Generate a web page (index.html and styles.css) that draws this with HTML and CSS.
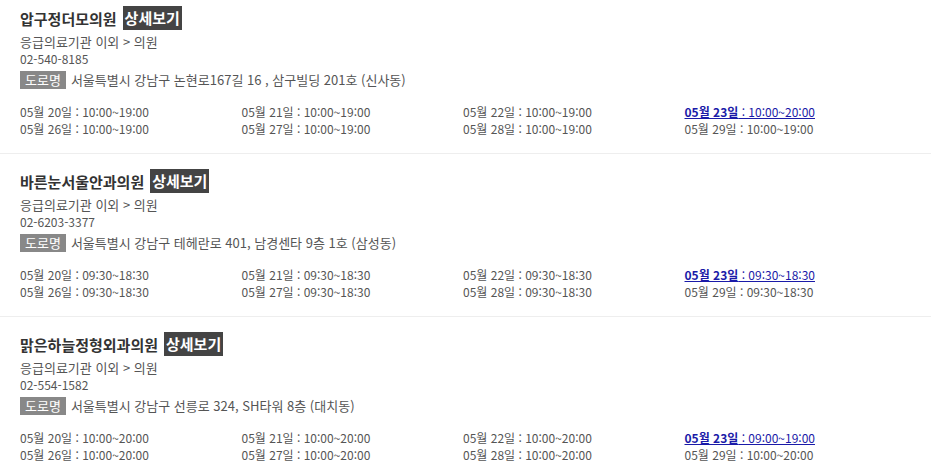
FILE: index.html
```html
<!DOCTYPE html>
<html lang="ko">
<head>
<meta charset="utf-8">
<link rel="stylesheet" href="styles.css">
</head>
<body>
<ul class="list">
  <li class="item">
    <div class="title-row"><span class="name">압구정더모의원</span><a class="detail">상세보기</a></div>
    <p class="cat">응급의료기관 이외 &gt; 의원</p>
    <p class="tel">02-540-8185</p>
    <p class="addr"><span class="tag">도로명</span>서울특별시 강남구 논현로167길 16 , 삼구빌딩 201호 (신사동)</p>
    <ul class="hours">
      <li>05월 20일 : 10:00~19:00</li>
      <li>05월 21일 : 10:00~19:00</li>
      <li>05월 22일 : 10:00~19:00</li>
      <li class="today"><b>05월 23일</b> : 10:00~20:00</li>
      <li>05월 26일 : 10:00~19:00</li>
      <li>05월 27일 : 10:00~19:00</li>
      <li>05월 28일 : 10:00~19:00</li>
      <li>05월 29일 : 10:00~19:00</li>
    </ul>
  </li>
  <li class="item">
    <div class="title-row"><span class="name">바른눈서울안과의원</span><a class="detail">상세보기</a></div>
    <p class="cat">응급의료기관 이외 &gt; 의원</p>
    <p class="tel">02-6203-3377</p>
    <p class="addr"><span class="tag">도로명</span>서울특별시 강남구 테헤란로 401, 남경센타 9층 1호 (삼성동)</p>
    <ul class="hours">
      <li>05월 20일 : 09:30~18:30</li>
      <li>05월 21일 : 09:30~18:30</li>
      <li>05월 22일 : 09:30~18:30</li>
      <li class="today"><b>05월 23일</b> : 09:30~18:30</li>
      <li>05월 26일 : 09:30~18:30</li>
      <li>05월 27일 : 09:30~18:30</li>
      <li>05월 28일 : 09:30~18:30</li>
      <li>05월 29일 : 09:30~18:30</li>
    </ul>
  </li>
  <li class="item">
    <div class="title-row"><span class="name">맑은하늘정형외과의원</span><a class="detail">상세보기</a></div>
    <p class="cat">응급의료기관 이외 &gt; 의원</p>
    <p class="tel">02-554-1582</p>
    <p class="addr"><span class="tag">도로명</span>서울특별시 강남구 선릉로 324, SH타워 8층 (대치동)</p>
    <ul class="hours">
      <li>05월 20일 : 10:00~20:00</li>
      <li>05월 21일 : 10:00~20:00</li>
      <li>05월 22일 : 10:00~20:00</li>
      <li class="today"><b>05월 23일</b> : 09:00~19:00</li>
      <li>05월 26일 : 10:00~20:00</li>
      <li>05월 27일 : 10:00~20:00</li>
      <li>05월 28일 : 10:00~20:00</li>
      <li>05월 29일 : 10:00~20:00</li>
    </ul>
  </li>
</ul>
</body>
</html>
```
FILE: styles.css
```css
html, body {
  margin: 0;
  padding: 0;
  background: #fff;
}
body {
  font-family: "Noto Sans CJK KR", "Noto Sans", sans-serif;
  font-size: 12px;
  color: #555;
}
ul, p {
  margin: 0;
  padding: 0;
  list-style: none;
}
.item {
  padding: 15px 20px 16px;
  border-bottom: 1px solid #eee;
}
.item:first-child {
  padding-top: 6px;
}
.title-row {
  display: flex;
  align-items: center;
  gap: 6px;
  height: 24px;
}
.name {
  font-size: 15px;
  font-weight: bold;
  color: #333;
}
.detail {
  background: #444;
  color: #fff;
  font-size: 15px;
  font-weight: bold;
  line-height: 24px;
  height: 24px;
  padding: 0 2px;
}
.cat {
  margin-top: 3px;
  font-size: 13px;
  line-height: 17px;
}
.tel {
  line-height: 17px;
}
.addr {
  margin-top: 4px;
  display: flex;
  align-items: center;
  font-size: 13px;
  line-height: 18px;
}
.tag {
  background: #888;
  color: #fff;
  padding: 0 5px;
  margin-right: 5px;
  line-height: 18px;
}
.hours {
  margin-top: 15px;
  display: grid;
  grid-template-columns: repeat(4, 221.5px);
  line-height: 16.5px;
  color: #555;
}
.hours .today {
  color: #1a1aa8;
  text-decoration: underline;
}
.hours .today b {
  font-weight: bold;
}
```
